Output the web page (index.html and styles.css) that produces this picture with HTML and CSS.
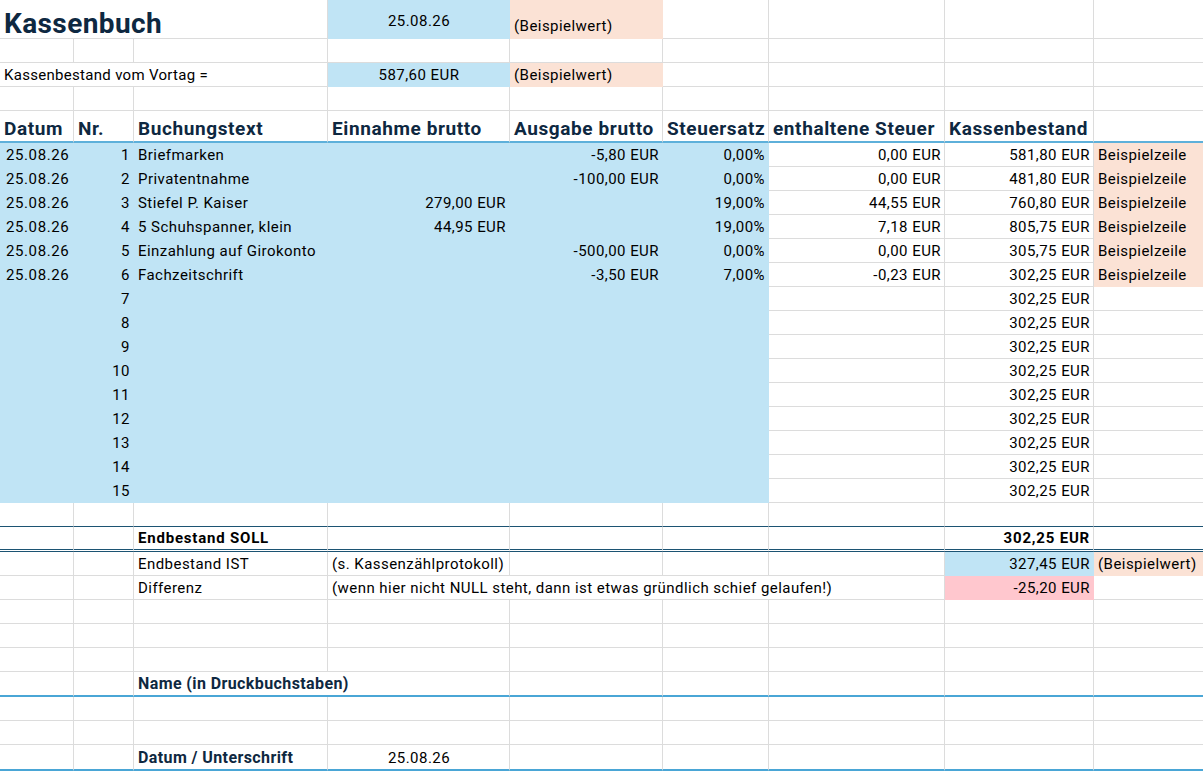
FILE: index.html
```html
<!DOCTYPE html>
<html lang="de">
<head>
<meta charset="utf-8">
<title>Kassenbuch</title>
<link rel="stylesheet" href="styles.css">
</head>
<body>
<table class="sheet">
  <colgroup>
    <col class="ca"><col class="cb"><col class="cc"><col class="cd"><col class="ce"><col class="cf"><col class="cg"><col class="ch"><col class="ci">
  </colgroup>
  <tbody>
    <tr class="h-title">
      <td colspan="3" class="title">Kassenbuch</td>
      <td class="blue c mid">25.08.26</td>
      <td class="peach e1">(Beispielwert)</td>
      <td></td><td></td><td></td><td></td>
    </tr>
    <tr class="h24"><td></td><td></td><td></td><td></td><td></td><td></td><td></td><td></td><td></td></tr>
    <tr class="h24">
      <td colspan="3" class="label">Kassenbestand vom Vortag =</td>
      <td class="blue c">587,60 EUR</td>
      <td class="peach">(Beispielwert)</td>
      <td></td><td></td><td></td><td></td>
    </tr>
    <tr class="h24"><td></td><td></td><td></td><td></td><td></td><td></td><td></td><td></td><td></td></tr>
    <tr class="h-head">
      <td>Datum</td><td>Nr.</td><td>Buchungstext</td><td>Einnahme brutto</td><td>Ausgabe brutto</td><td>Steuersatz</td><td>enthaltene Steuer</td><td>Kassenbestand</td><td></td>
    </tr>
    <tr class="h24 data">
      <td class="blue d">25.08.26</td><td class="blue r">1</td><td class="blue">Briefmarken</td><td class="blue r"></td><td class="blue r">-5,80 EUR</td><td class="blue r">0,00%</td><td class="r">0,00 EUR</td><td class="r">581,80 EUR</td><td class="peach">Beispielzeile</td>
    </tr>
    <tr class="h24 data">
      <td class="blue d">25.08.26</td><td class="blue r">2</td><td class="blue">Privatentnahme</td><td class="blue r"></td><td class="blue r">-100,00 EUR</td><td class="blue r">0,00%</td><td class="r">0,00 EUR</td><td class="r">481,80 EUR</td><td class="peach">Beispielzeile</td>
    </tr>
    <tr class="h24 data">
      <td class="blue d">25.08.26</td><td class="blue r">3</td><td class="blue">Stiefel P. Kaiser</td><td class="blue r">279,00 EUR</td><td class="blue r"></td><td class="blue r">19,00%</td><td class="r">44,55 EUR</td><td class="r">760,80 EUR</td><td class="peach">Beispielzeile</td>
    </tr>
    <tr class="h24 data">
      <td class="blue d">25.08.26</td><td class="blue r">4</td><td class="blue">5 Schuhspanner, klein</td><td class="blue r">44,95 EUR</td><td class="blue r"></td><td class="blue r">19,00%</td><td class="r">7,18 EUR</td><td class="r">805,75 EUR</td><td class="peach">Beispielzeile</td>
    </tr>
    <tr class="h24 data">
      <td class="blue d">25.08.26</td><td class="blue r">5</td><td class="blue">Einzahlung auf Girokonto</td><td class="blue r"></td><td class="blue r">-500,00 EUR</td><td class="blue r">0,00%</td><td class="r">0,00 EUR</td><td class="r">305,75 EUR</td><td class="peach">Beispielzeile</td>
    </tr>
    <tr class="h24 data">
      <td class="blue d">25.08.26</td><td class="blue r">6</td><td class="blue">Fachzeitschrift</td><td class="blue r"></td><td class="blue r">-3,50 EUR</td><td class="blue r">7,00%</td><td class="r">-0,23 EUR</td><td class="r">302,25 EUR</td><td class="peach">Beispielzeile</td>
    </tr>
    <tr class="h24 data"><td class="blue"></td><td class="blue r">7</td><td class="blue"></td><td class="blue"></td><td class="blue"></td><td class="blue"></td><td></td><td class="r">302,25 EUR</td><td></td></tr>
    <tr class="h24 data"><td class="blue"></td><td class="blue r">8</td><td class="blue"></td><td class="blue"></td><td class="blue"></td><td class="blue"></td><td></td><td class="r">302,25 EUR</td><td></td></tr>
    <tr class="h24 data"><td class="blue"></td><td class="blue r">9</td><td class="blue"></td><td class="blue"></td><td class="blue"></td><td class="blue"></td><td></td><td class="r">302,25 EUR</td><td></td></tr>
    <tr class="h24 data"><td class="blue"></td><td class="blue r">10</td><td class="blue"></td><td class="blue"></td><td class="blue"></td><td class="blue"></td><td></td><td class="r">302,25 EUR</td><td></td></tr>
    <tr class="h24 data"><td class="blue"></td><td class="blue r">11</td><td class="blue"></td><td class="blue"></td><td class="blue"></td><td class="blue"></td><td></td><td class="r">302,25 EUR</td><td></td></tr>
    <tr class="h24 data"><td class="blue"></td><td class="blue r">12</td><td class="blue"></td><td class="blue"></td><td class="blue"></td><td class="blue"></td><td></td><td class="r">302,25 EUR</td><td></td></tr>
    <tr class="h24 data"><td class="blue"></td><td class="blue r">13</td><td class="blue"></td><td class="blue"></td><td class="blue"></td><td class="blue"></td><td></td><td class="r">302,25 EUR</td><td></td></tr>
    <tr class="h24 data"><td class="blue"></td><td class="blue r">14</td><td class="blue"></td><td class="blue"></td><td class="blue"></td><td class="blue"></td><td></td><td class="r">302,25 EUR</td><td></td></tr>
    <tr class="h24 data"><td class="blue"></td><td class="blue r">15</td><td class="blue"></td><td class="blue"></td><td class="blue"></td><td class="blue"></td><td></td><td class="r">302,25 EUR</td><td></td></tr>
    <tr class="h24 pre-total"><td></td><td></td><td></td><td></td><td></td><td></td><td></td><td></td><td></td></tr>
    <tr class="h-total">
      <td></td><td></td><td class="b">Endbestand SOLL</td><td></td><td></td><td></td><td></td><td class="r b">302,25 EUR</td><td></td>
    </tr>
    <tr class="h24">
      <td></td><td></td><td>Endbestand IST</td><td>(s. Kassenzählprotokoll)</td><td></td><td></td><td></td><td class="blue r">327,45 EUR</td><td class="peach">(Beispielwert)</td>
    </tr>
    <tr class="h24">
      <td></td><td></td><td>Differenz</td><td colspan="4">(wenn hier nicht NULL steht, dann ist etwas gründlich schief gelaufen!)</td><td class="pink r">-25,20 EUR</td><td></td>
    </tr>
    <tr class="h24"><td></td><td></td><td></td><td></td><td></td><td></td><td></td><td></td><td></td></tr>
    <tr class="h24"><td></td><td></td><td></td><td></td><td></td><td></td><td></td><td></td><td></td></tr>
    <tr class="h24"><td></td><td></td><td></td><td></td><td></td><td></td><td></td><td></td><td></td></tr>
    <tr class="h-sign">
      <td></td><td></td><td colspan="2" class="sign">Name (in Druckbuchstaben)</td><td></td><td></td><td></td><td></td><td></td>
    </tr>
    <tr class="h24"><td></td><td></td><td></td><td></td><td></td><td></td><td></td><td></td><td></td></tr>
    <tr class="h24"><td></td><td></td><td></td><td></td><td></td><td></td><td></td><td></td><td></td></tr>
    <tr class="h-sign">
      <td></td><td></td><td class="sign">Datum / Unterschrift</td><td class="c">25.08.26</td><td></td><td></td><td></td><td></td><td></td>
    </tr>
  </tbody>
</table>
</body>
</html>
```

FILE: styles.css
```css
* {
  box-sizing: border-box;
}

html, body {
  margin: 0;
  padding: 0;
  background: #ffffff;
}

body {
  font-family: Roboto, "Liberation Sans", Arial, sans-serif;
  color: #000000;
  overflow: hidden;
}

.sheet {
  border-collapse: separate;
  border-spacing: 0;
  table-layout: fixed;
  width: 1203px;
}

.ca { width: 74px; }
.cb { width: 60px; }
.cc { width: 194px; }
.cd { width: 182px; }
.ce { width: 153px; }
.cf { width: 106px; }
.cg { width: 176px; }
.ch { width: 149px; }
.ci { width: 109px; }

.sheet td {
  border-right: 1px solid #dcdcdc;
  border-bottom: 1px solid #dcdcdc;
  padding: 0 3px 2px 4px;
  white-space: nowrap;
  vertical-align: bottom;
  font-size: 15px;
  line-height: 18px;
  letter-spacing: 0.45px;
  overflow: visible;
}

.sheet td:last-child {
  border-right: none;
}

.h-title td { height: 39px; }
.h24 td { height: 24px; }

.h-head td {
  height: 32px;
  border-bottom: 2px solid #5eb0da;
  font-size: 19px;
  font-weight: 700;
  color: #0e2841;
  letter-spacing: 0.6px;
  padding-bottom: 3px;
}

.pre-total td {
  border-bottom: 1px solid #1c5373;
}

.h-total td {
  height: 25px;
  border-bottom: 3px double #1c5373;
}

.h-sign td {
  height: 25px;
  border-bottom: 2px solid #4aa6d6;
}

.h-sign:last-child td {
  height: 26px;
}

.sheet td.title {
  font-size: 28px;
  font-weight: 700;
  color: #0e2841;
  padding-bottom: 5px;
  letter-spacing: 0.4px;
}

.sheet td.label {
  letter-spacing: 0.3px;
}

.sheet td.d {
  padding-left: 6px;
  letter-spacing: 0.6px;
}

.sheet td.mid {
  vertical-align: middle;
  padding-top: 3px;
  padding-bottom: 0;
}

.sheet td.e1 {
  padding-bottom: 3px;
}

.r { text-align: right; }
.c { text-align: center; }

.sheet td.b {
  font-weight: 700;
  letter-spacing: 0.8px;
}

.sheet td.sign {
  font-size: 16px;
  font-weight: 700;
  color: #0e2841;
  letter-spacing: 0.4px;
}

.sheet td.blue {
  background: #c0e4f5;
  border-right-color: #c0e4f5;
  border-bottom-color: #c0e4f5;
}

.sheet td.peach {
  background: #fbe2d5;
  border-right-color: #fbe2d5;
  border-bottom-color: #fbe2d5;
}

.sheet td.pink {
  background: #ffc7ce;
  border-right-color: #ffc7ce;
  border-bottom-color: #ffc7ce;
}
```
